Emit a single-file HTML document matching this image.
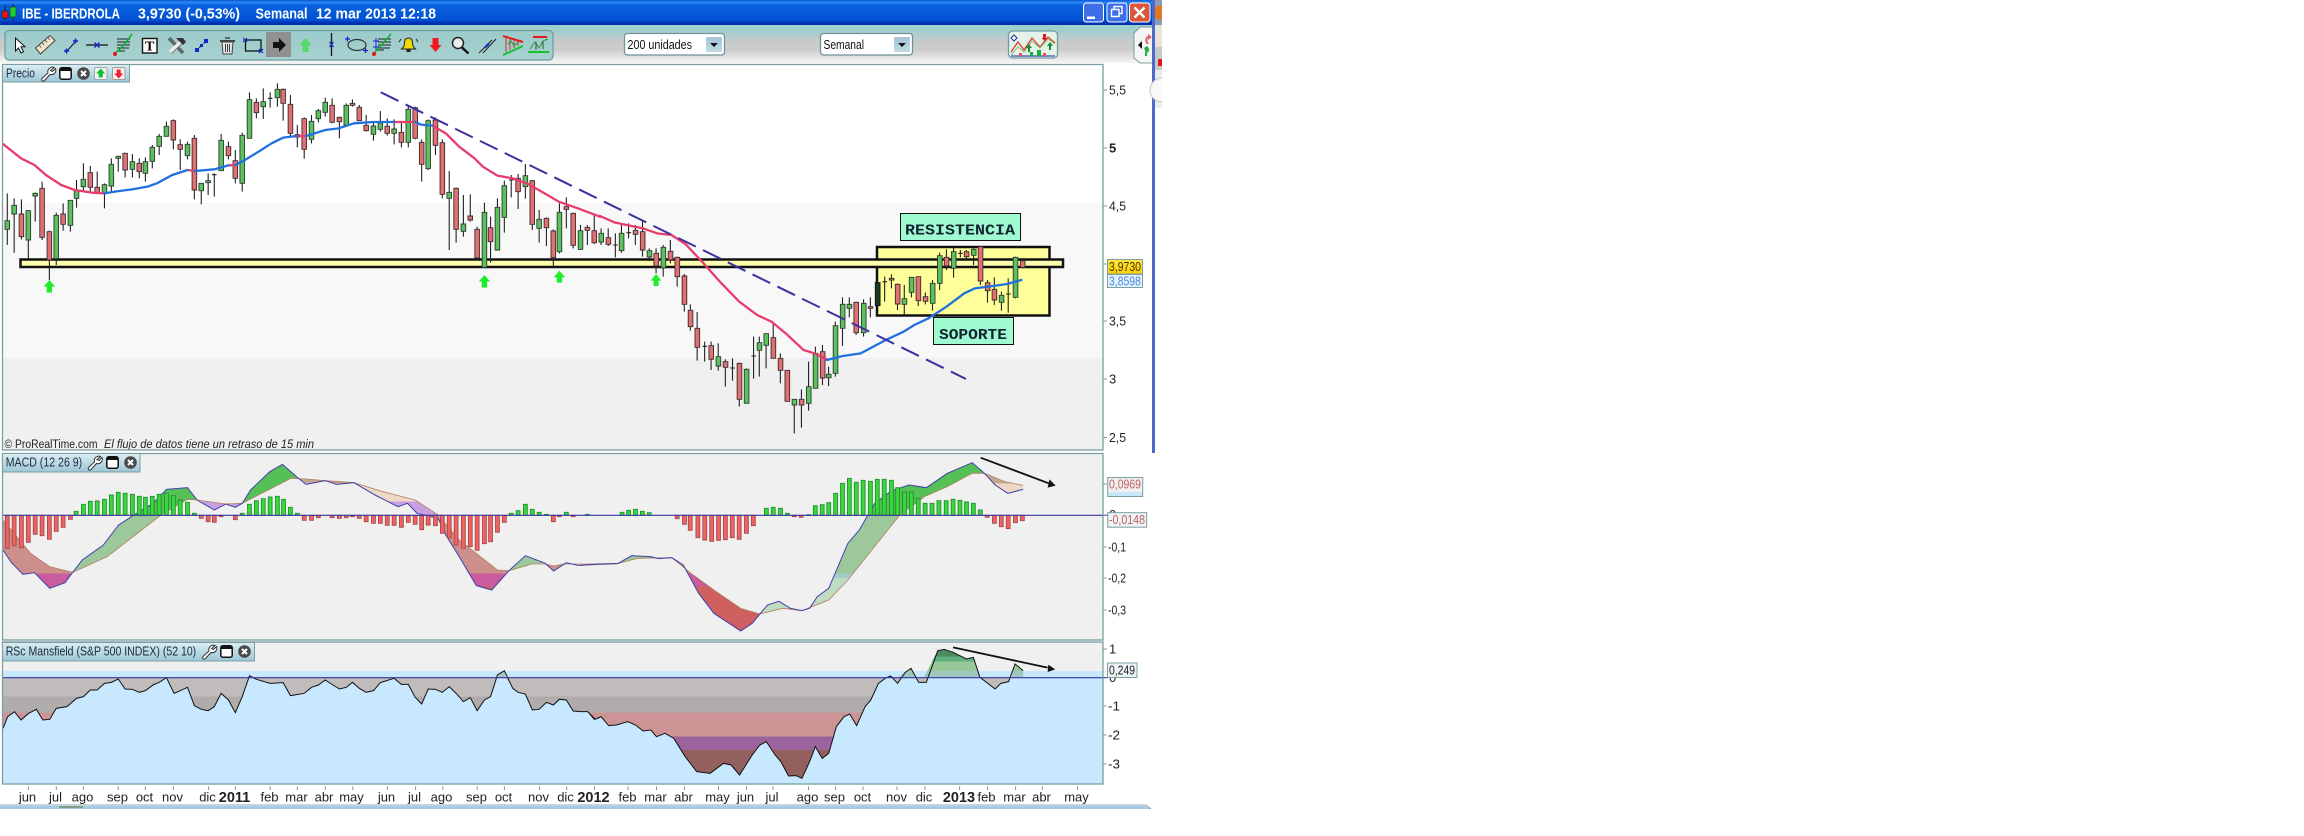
<!DOCTYPE html>
<html lang="es"><head><meta charset="utf-8"><title>IBE - IBERDROLA</title>
<style>html,body{margin:0;padding:0;background:#fff;width:2304px;height:836px;overflow:hidden}svg{display:block;position:absolute;left:0;top:0}text{font-family:"Liberation Sans",sans-serif}</style></head><body>
<svg width="2304" height="836" viewBox="0 0 2304 836" xmlns="http://www.w3.org/2000/svg">
<defs>
<linearGradient id="tb" x1="0" y1="0" x2="0" y2="1"><stop offset="0" stop-color="#0b55d8"/><stop offset=".1" stop-color="#2b8df5"/><stop offset=".2" stop-color="#0a62e0"/><stop offset=".8" stop-color="#0052d2"/><stop offset=".92" stop-color="#0030b4"/><stop offset="1" stop-color="#0030a8"/></linearGradient>
<linearGradient id="tool" x1="0" y1="0" x2="0" y2="1"><stop offset="0" stop-color="#9dcfcf"/><stop offset=".15" stop-color="#a3cdcd"/><stop offset=".45" stop-color="#cacaca"/><stop offset=".65" stop-color="#cccccc"/><stop offset="1" stop-color="#f6f6f6"/></linearGradient>
<linearGradient id="tb2" x1="0" y1="0" x2="0" y2="1"><stop offset="0" stop-color="#9ccaca"/><stop offset="1" stop-color="#a6d2d0"/></linearGradient>
<linearGradient id="tab" x1="0" y1="0" x2="0" y2="1"><stop offset="0" stop-color="#dceef2"/><stop offset="1" stop-color="#9cc6d6"/></linearGradient>
<linearGradient id="dd" x1="0" y1="0" x2="0" y2="1"><stop offset="0" stop-color="#a4c4dc"/><stop offset="1" stop-color="#c2dae0"/></linearGradient>
<linearGradient id="yel" x1="0" y1="0" x2="0" y2="1"><stop offset="0" stop-color="#ffe640"/><stop offset="1" stop-color="#ffd000"/></linearGradient>
<linearGradient id="rr" gradientUnits="userSpaceOnUse" x1="0" y1="0" x2="0" y2="600"><stop offset=".217" stop-color="#c8a890"/><stop offset=".217" stop-color="#eed8c8"/><stop offset=".308" stop-color="#eed8c8"/><stop offset=".308" stop-color="#c8a0e0"/><stop offset=".4" stop-color="#c8a0e0"/><stop offset=".4" stop-color="#cc8f8c"/><stop offset=".667" stop-color="#cc8f8c"/><stop offset=".667" stop-color="#c85c9c"/><stop offset=".733" stop-color="#c85c9c"/><stop offset=".733" stop-color="#d06060"/></linearGradient>
<linearGradient id="gg" gradientUnits="userSpaceOnUse" x1="0" y1="0" x2="0" y2="600"><stop offset=".377" stop-color="#55c055"/><stop offset=".377" stop-color="#9cc89c"/><stop offset=".667" stop-color="#9cc89c"/><stop offset=".667" stop-color="#a4ccc8"/><stop offset=".69" stop-color="#a4ccc8"/><stop offset=".69" stop-color="#c0dcc0"/></linearGradient>
<linearGradient id="rs" gradientUnits="userSpaceOnUse" x1="0" y1="600" x2="0" y2="1100"><stop offset=".056" stop-color="#4c8c5c"/><stop offset=".1" stop-color="#4c8c5c"/><stop offset=".1" stop-color="#60b080"/><stop offset=".13" stop-color="#60b080"/><stop offset=".13" stop-color="#98c898"/><stop offset=".186" stop-color="#98c898"/><stop offset=".186" stop-color="#a0c8c0"/><stop offset=".226" stop-color="#a0c8c0"/><stop offset=".226" stop-color="#c0bcbc"/><stop offset=".34" stop-color="#c0bcbc"/><stop offset=".34" stop-color="#b0acac"/><stop offset=".436" stop-color="#b0acac"/><stop offset=".436" stop-color="#cc9494"/><stop offset=".58" stop-color="#cc9494"/><stop offset=".58" stop-color="#9c649c"/><stop offset=".66" stop-color="#9c649c"/><stop offset=".66" stop-color="#94605e"/></linearGradient>
<g id="wr"><path d="M13 1.500a4.500 4.500 0 0 0-6 5.500L1 12.500a1.500 1.500 0 0 0 2.500 2L9 8.500a4.500 4.500 0 0 0 5.500-6L11.500 5.500 9.500 4.500z" fill="#fff" stroke="#333" stroke-width="1"/></g>
<g id="wn"><rect x=".8" y=".8" width="11.400" height="11.400" rx="2" fill="#fff" stroke="#111" stroke-width="1.500"/><rect x="1" y="1" width="11" height="3" fill="#111"/></g>
<g id="xc"><circle cx="6.500" cy="6.500" r="6.300" fill="#4a4a4a"/><path d="M4 4l5 5M9 4l-5 5" stroke="#fff" stroke-width="2"/></g>
</defs>

<rect width="2304" height="836" fill="#fff"/>
<!-- title -->
<rect x="0" y="0" width="1153" height="25" fill="url(#tb)"/>
<path d="M5 5V21" stroke="#222"/>
<rect x="2" y="11" width="6" height="7" fill="#e8141c" stroke="#222" stroke-width=".6"/>
<path d="M13 4V21" stroke="#222"/>
<rect x="10" y="7" width="6" height="10" fill="#18d030" stroke="#222" stroke-width=".6"/>
<g fill="#fff" font-weight="bold" font-size="15">
<text x="22" y="18.500" textLength="98" lengthAdjust="spacingAndGlyphs">IBE - IBERDROLA</text>
<text x="138" y="18.500" textLength="102" lengthAdjust="spacingAndGlyphs">3,9730 (-0,53%)</text>
<text x="255.500" y="18.500" textLength="52" lengthAdjust="spacingAndGlyphs">Semanal</text>
<text x="316" y="18.500" textLength="120" lengthAdjust="spacingAndGlyphs">12 mar 2013 12:18</text>
</g>
<rect x="1083.500" y="3" width="20" height="19" rx="3" fill="#3c6ee8" stroke="#fff"/>
<rect x="1087" y="16.500" width="8" height="2.500" fill="#fff"/>
<rect x="1107" y="3" width="20" height="19" rx="3" fill="#3c6ee8" stroke="#fff"/>
<path d="M1114 9V6.500h8v7h-2.500M1111.500 9.500h7.500v7h-7.500z" fill="none" stroke="#fff" stroke-width="1.400"/>
<rect x="1129.500" y="3" width="20.500" height="19" rx="3" fill="#d9583a" stroke="#fff"/>
<path d="M1134.500 7.500l10 10M1144.500 7.500l-10 10" stroke="#fff" stroke-width="2.400"/>

<!-- toolbar -->
<rect x="0" y="25" width="1153" height="38" fill="url(#tool)"/>
<rect x="5" y="30.500" width="548" height="29.500" rx="4" fill="url(#tb2)" stroke="#6f9ea2" stroke-width="1.300"/>
<rect x="266" y="32" width="25" height="25" fill="#8f9191"/>
<path d="M15.500 38V51l3-3 2.500 5 2.500-1.200-2.500-5h4z" fill="#fff" stroke="#111"/>
<path d="M35.500 48L50 35.500l5 5L40.500 54z" fill="#efe6c8" stroke="#444"/>
<path d="M39 45l2 2.500M42 42.500l2 2.500M45 40l2 2.500M48 37.500l2 2.500" stroke="#555"/>
<path d="M67 51L76 41" stroke="#124" stroke-width="1.200"/>
<path d="M64 51h5M66.500 48.500v5M73 41h5M75.500 38.500v5" stroke="#1820d0" stroke-width="1.500"/>
<path d="M86 45H108" stroke="#111" stroke-width="1.200"/><path d="M94.500 42.500l5 5M99.500 42.500l-5 5" stroke="#1820d0" stroke-width="1.300"/>
<path d="M117 39h13M117 42h13M117 45h13M117 48h12M117 51h8" stroke="#222"/>
<path d="M114 54l6-5 7-8 5-7" stroke="#10b030" fill="none" stroke-width="1.600"/><circle cx="115" cy="54" r="2" fill="#e81818"/>
<rect x="142.500" y="38.500" width="14.500" height="14.500" fill="#fff" stroke="#111" stroke-width="1.400"/>
<text x="145" y="50.500" font-size="14" font-weight="bold" style="font-family:'Liberation Serif',serif">T</text>
<path d="M169 38l14 15M172 40l-2 2" stroke="#666" stroke-width="3.500"/><path d="M184 39l-14 13" stroke="#eee" stroke-width="3.500"/><path d="M184 39l-14 13" stroke="#777" stroke-width="1" transform="translate(1.500 1.500)"/>
<path d="M176 38h7l3 4-3 3-4-4z" fill="#333"/>
<path d="M197 50L206 41" stroke="#124" stroke-dasharray="2 1"/><rect x="195" y="48" width="4" height="4" fill="#1820d0"/><rect x="204" y="39" width="4" height="4" fill="#1820d0"/><rect x="200" y="44" width="3" height="3" fill="#1820d0"/>
<path d="M220 41h15" stroke="#444" stroke-width="2"/><path d="M225 38h5" stroke="#444" stroke-width="1.500"/>
<path d="M222 42l1 12h9l1-12z" fill="#e4e4e4" stroke="#444"/><path d="M225.500 44v8M227.500 44v8M229.500 44v8" stroke="#444"/>
<rect x="245.500" y="40" width="15.500" height="11" fill="none" stroke="#111" stroke-width="1.300"/>
<path d="M243 38l4 4M247 38l-4 4M259 49l4 4M263 49l-4 4" stroke="#1820d0" stroke-width="1.200"/>
<path d="M273 42h6v-4l7 7-7 7v-4h-6z" fill="#111"/>
<path d="M305.500 38l6 7h-3v7h-6v-7h-3z" fill="#58d868"/>
<path d="M331.500 33V56" stroke="#111" stroke-width="1.300"/><path d="M329.500 42l4 5M333.500 42l-4 5" stroke="#1820d0" stroke-width="1.200"/>
<ellipse cx="357" cy="45" rx="9" ry="5.500" fill="none" stroke="#333" stroke-width="1.200"/>
<path d="M345 39h5M347.500 36.500v5M363 50.500h5M365.500 48v5" stroke="#1820d0" stroke-width="1.300"/>
<path d="M378 39h13M378 42h13M378 45h13M378 48h12M378 50h6" stroke="#222"/><path d="M373 54l5-5 7-8 6-7" stroke="#10b030" fill="none" stroke-width="1.500"/><path d="M373 41h6M376 38v6M373 47h6M376 44v6" stroke="#1820d0"/><circle cx="374" cy="54" r="2" fill="#e81818"/>
<path d="M408.500 38c-3 0-4 2-4 5 0 4-2 5-3 6h14c-1-1-3-2-3-6 0-3-1-5-4-5z" fill="#f2d800" stroke="#222"/><rect x="406.500" y="49.500" width="4" height="2.500" fill="#222"/>
<path d="M401 39l-2 3M416 39l2 3" stroke="#222"/>
<path d="M435.500 52l-6-7h3v-7h6v7h3z" fill="#ee1a24"/>
<circle cx="458" cy="43" r="5.500" fill="#e8eef0" stroke="#222" stroke-width="1.500"/><path d="M462 47.500l6.500 6" stroke="#111" stroke-width="2.500"/>
<path d="M479 53L492 40M483 53l13-14" stroke="#222"/><path d="M485 47.500l4-4" stroke="#1820d0" stroke-width="2"/>
<path d="M503 36l20 6" stroke="#e81818" stroke-width="2"/><path d="M503 55l20-9" stroke="#18c030" stroke-width="2"/><path d="M506 38v14M510 39v11M514 40v8M518 41v5" stroke="#d03030"/><path d="M508 44l3-3 3 5 4-4" stroke="#18a030" fill="none"/>
<path d="M533 37h14" stroke="#e81818" stroke-width="2"/><path d="M528 52h21" stroke="#18c030" stroke-width="2"/><path d="M530 49l5-7 4 6 4-7 5-2" stroke="#18a030" fill="none"/><path d="M536 42v8M543 41v8" stroke="#444"/>

<!-- combos -->
<rect x="624.500" y="33.500" width="100" height="21.500" rx="3" fill="#fff" stroke="#6f9498" stroke-width="1.300"/>
<rect x="706" y="37" width="16" height="15" rx="1" fill="url(#dd)"/><path d="M710 43h8l-4 4z" fill="#111"/>
<text x="627.500" y="49" font-size="13" fill="#111" textLength="64.500" lengthAdjust="spacingAndGlyphs">200 unidades</text>
<rect x="820.500" y="33.500" width="92" height="21.500" rx="3" fill="#fff" stroke="#6f9498" stroke-width="1.300"/>
<rect x="894" y="37" width="16" height="15" rx="1" fill="url(#dd)"/><path d="M898 43h8l-4 4z" fill="#111"/>
<text x="823.500" y="49" font-size="13" fill="#111" textLength="40.500" lengthAdjust="spacingAndGlyphs">Semanal</text>
<rect x="1008.500" y="31" width="49" height="27" rx="4" fill="#e4f2ea" stroke="#6f9ea2" stroke-width="1.300"/>
<path d="M1011 52l7-10 6 8 8-12 8 9 8-10 7 6" fill="none" stroke="#d84030" stroke-width="1.300"/>
<path d="M1011 55l7-8 6 5 8-11 8 7 8-9 7 5" fill="none" stroke="#88c070" stroke-width="1"/>
<path d="M1014 35l3 3-3 3-3-3z" fill="#fff" stroke="#2030a0"/>
<path d="M1044 42v-4h-1.500l3-3 0 0 3 3h-1.500v4z" fill="#e01820" transform="rotate(180 1045 38)"/>
<path d="M1028 52v-4h-2l3-4 3 4h-2v4z" fill="#109030"/><path d="M1049 50v-4h-2l3-4 3 4h-2v4z" fill="#109030"/>
<path d="M1011 56h44" stroke="#1020a0"/><rect x="1030" y="52" width="3" height="4" fill="#10b040"/><rect x="1037" y="50" width="4" height="6" fill="#10b040"/><rect x="1019" y="53" width="3" height="3" fill="#e85060"/><rect x="1043" y="53" width="3" height="3" fill="#e85060"/>
<path d="M1153 27h-13l-6 6v25l6 5h13z" fill="#f5f5f5" stroke="#7a9ea0"/>
<path d="M1138 45l4-4v8z" fill="#111"/>
<path d="M1147 44c-3-3-2-7 1-8v-2l4 3-4 3v-2c-1 1-1 3 1 6z" fill="#e06070"/>
<path d="M1147 46c3 3 2 6 0 7v3h-2v-3c1-1 0-3-1-5z" fill="#20b040"/><path d="M1146 47l4 3h-5z" fill="#20b040"/>

<!-- panels -->
<rect x="2.500" y="64" width="1100.500" height="386" fill="#fff"/>
<rect x="2.500" y="203" width="1100.500" height="155" fill="#f8f8f8"/>
<rect x="2.500" y="358" width="1100.500" height="92" fill="#f0f0f0"/>
<rect x="2.500" y="453.500" width="1100.500" height="186.500" fill="#f0f0f0"/>
<rect x="2.500" y="642" width="1100.500" height="29" fill="#f0f0f0"/>
<rect x="2.500" y="671" width="1100.500" height="113" fill="#c8e8ff"/>

<rect x="877" y="247" width="172.500" height="68.500" fill="#ffff99" stroke="#111" stroke-width="2.500"/>
<rect x="20.500" y="259.500" width="1042.500" height="7.500" fill="#ffffb0" stroke="#111" stroke-width="2.500"/>

<g transform="translate(0 60) scale(.38265 .33333)">
<path vector-effect="non-scaling-stroke" fill="none" stroke="#222" stroke-width="1.100" d="M19 400V555M37 415V578M56 418V538M74 450V598M92 397V485M110 365V540M129 512V660M147 458V615M165 430V512M184 420V515M200 360V443M218 310V395M236 318V395M254 335V400M273 370V445M291 295V395M309 287V335M327 278V352M346 282V352M364 295V355M380 292V365M398 255V325M416 222V285M435 185V230M453 178V268M471 238V330M490 245V298M508 225V418M526 370V433M544 340V405M560 340V410M578 222V332M597 245V298M615 270V370M633 218V395M652 97V235M670 115V175M688 85V177M706 97V143M725 70V140M740 85V182M759 105V228M777 195V262M795 172V296M814 165V250M832 147V187M850 113V170M868 115V190M887 170V235M905 130V200M921 118V140M939 135V183M957 165V215M976 183V242M994 153V215M1012 175V227M1030 178V253M1049 188V262M1067 135V262M1085 140V238M1102 238V365M1119 178V330M1138 172V285M1156 238V415M1174 333V570M1192 383V548M1211 405V530M1229 403V485M1247 500V600M1266 428V622M1282 470V608M1300 415V572M1318 362V518M1336 345V412M1354 342V447M1373 312V416M1391 360V510M1409 450V548M1428 472V558M1446 508V620M1462 430V580M1480 412V505M1498 458V565M1517 495V570M1535 495V555M1553 465V552M554 344h12M700 115h12M1330 360h12"/>
<path vector-effect="non-scaling-stroke" fill="#5cc060" stroke="#2c3c2c" stroke-width=".9" d="M13 482h12v26h-12zM31 436h12v26h-12zM68 452h12v88h-12zM86 400h12v8h-12zM141 466h12v130h-12zM178 421h12v75h-12zM194 390h12v25h-12zM212 358h12v22h-12zM267 374h12v26h-12zM285 313h12v65h-12zM303 289h12v6h-12zM340 305h12v23h-12zM374 305h12v35h-12zM392 262h12v42h-12zM410 229h12v30h-12zM429 199h12v30h-12zM484 253h12v34h-12zM520 370h12v22h-12zM538 362h12v6h-12zM572 241h12v91h-12zM627 226h12v144h-12zM646 119h12v116h-12zM682 125h12v15h-12zM719 88h12v25h-12zM808 184h12v54h-12zM826 152h12v24h-12zM844 127h12v30h-12zM899 136h12v59h-12zM970 198h12v25h-12zM988 189h12v19h-12zM1024 207h12v13h-12zM1061 148h12v99h-12zM1113 182h12v144h-12zM1168 397h12v18h-12zM1205 492h12v22h-12zM1260 457h12v165h-12zM1294 442h12v128h-12zM1312 377h12v95h-12zM1367 347h12v33h-12zM1403 478h12v27h-12zM1456 457h12v118h-12zM1511 512h12v56h-12z"/>
<path vector-effect="non-scaling-stroke" fill="#e07074" stroke="#3c2c2c" stroke-width=".9" d="M50 462h12v68h-12zM104 385h12v147h-12zM123 515h12v85h-12zM159 462h12v31h-12zM230 338h12v44h-12zM248 382h12v16h-12zM321 280h12v50h-12zM358 310h12v25h-12zM447 182h12v58h-12zM465 254h12v14h-12zM502 235h12v155h-12zM591 260h12v27h-12zM609 302h12v53h-12zM664 127h12v31h-12zM734 88h12v42h-12zM753 133h12v87h-12zM771 224h12v7h-12zM789 176h12v92h-12zM862 136h12v51h-12zM881 172h12v13h-12zM915 130h12v6h-12zM933 142h12v40h-12zM951 196h12v16h-12zM1006 199h12v21h-12zM1043 217h12v30h-12zM1079 143h12v92h-12zM1096 247h12v66h-12zM1132 180h12v76h-12zM1150 248h12v155h-12zM1186 385h12v123h-12zM1223 468h12v12h-12zM1241 508h12v86h-12zM1276 503h12v42h-12zM1348 355h12v40h-12zM1385 362h12v131h-12zM1422 475h12v28h-12zM1440 513h12v80h-12zM1474 440h12v8h-12zM1492 460h12v96h-12zM1529 502h12v9h-12zM1547 512h12v36h-12z"/>
<g fill="none" stroke-linejoin="round" stroke-linecap="round">
<path vector-effect="non-scaling-stroke" stroke="#e83c6c" stroke-width="2.300" d="M8 252L55 295 90 315 120 345 160 375 195 390 240 398 273 400M490 330L510 333M597 316L615 315M775 228L800 228M1030 186L1085 186M1130 197L1165 220 1200 260 1240 295 1262 320 1300 347 1340 355 1380 372 1420 398 1460 425 1510 445 1568 470"/>
<path vector-effect="non-scaling-stroke" stroke="#2070e0" stroke-width="2.300" d="M273 400L300 395 345 388 385 380 410 370 450 345 490 330M510 333L560 328 597 316M615 315L640 300 680 272 710 250 740 233 775 228M800 228L850 210 885 205 925 190 975 186 1030 186M1085 186L1100 194 1130 197"/>
</g>
<g fill="#1eee2a">
<path d="M129 660l15 20h-8v18h-14v-18h-8z"/><path d="M1266 645l15 20h-8v18h-14v-18h-8z"/><path d="M1462 632l15 20h-8v16h-14v-16h-8z"/>
</g>
</g>
<g transform="translate(600 60) scale(.35714 .33333)">
<path vector-effect="non-scaling-stroke" fill="none" stroke="#222" stroke-width="1.100" d="M3 505V555M23 505V558M43 520V592M60 495V578M80 490V535M99 495V555M119 485V590M138 565V603M157 565V640M177 555V650M197 540V610M216 590V680M236 642V755M253 733V812M272 756V902M293 845V905M311 845V930M331 850V932M351 898V980M371 895V962M390 908V1040M410 925V1030M430 830V956M446 830V950M465 820V925M485 790V895M505 880V970M524 930V1025M544 1018V1120M564 988V1103M584 905V1052M603 860V985M623 855V975M640 920V978M659 785V950M679 712V858M698 712V772M717 725V825M738 718V830M757 712V772M777 665V740M797 650V725M816 643V685M833 670V750M852 675V765M872 652V712M891 650V738M911 697V733M931 660V752M951 578V690M970 568V630M990 562V653M1009 570V592M1026 570V600M1046 565V615M1065 560V675M1085 660V728M1104 652V735M1124 695V752M1143 655V758M1163 590V715M1183 595V625M37 555h13M74 518h13M287 859h13M365 924h13M424 888h13M791 665h13M1003 580h13M1137 702h13"/>
<path vector-effect="non-scaling-stroke" fill="#5cc060" stroke="#2c3c2c" stroke-width=".9" d="M-3 520h13v26h-13zM54 520h13v52h-13zM132 572h13v19h-13zM171 562h13v62h-13zM325 890h13v28h-13zM404 928h13v102h-13zM440 848h13v23h-13zM459 821h13v35h-13zM538 1018h13v17h-13zM578 980h13v50h-13zM597 880h13v105h-13zM634 943h13v10h-13zM653 797h13v143h-13zM673 733h13v72h-13zM692 733h13v12h-13zM732 730h13v88h-13zM846 716h13v17h-13zM866 652h13v45h-13zM925 670h13v60h-13zM945 587h13v83h-13zM984 575h13v50h-13zM1040 568h13v18h-13zM1118 706h13v21h-13zM1157 592h13v120h-13z"/>
<path vector-effect="non-scaling-stroke" fill="#1e3a22" stroke="#111" stroke-width="1" d="M771 668h13v69h-13z"/>
<path vector-effect="non-scaling-stroke" fill="#e07074" stroke="#3c2c2c" stroke-width=".9" d="M17 533h13v20h-13zM93 511h13v12h-13zM113 515h13v55h-13zM151 580h13v38h-13zM191 574h13v26h-13zM210 592h13v58h-13zM230 648h13v85h-13zM247 751h13v49h-13zM266 805h13v57h-13zM305 857h13v41h-13zM345 905h13v17h-13zM384 910h13v108h-13zM479 833h13v62h-13zM499 895h13v36h-13zM518 931h13v93h-13zM558 1018h13v17h-13zM617 875h13v79h-13zM711 727h13v91h-13zM751 740h13v5h-13zM810 655h13v5h-13zM827 673h13v59h-13zM885 650h13v72h-13zM905 710h13v14h-13zM964 592h13v26h-13zM1020 575h13v15h-13zM1059 560h13v103h-13zM1079 668h13v24h-13zM1098 688h13v32h-13zM1177 602h13v20h-13z"/>
<g fill="none" stroke-linejoin="round" stroke-linecap="round">
<path vector-effect="non-scaling-stroke" stroke="#e83c6c" stroke-width="2.300" d="M0 468L40 487 80 496 120 505 160 520 200 525 240 553 290 610 340 670 390 725 440 765 480 785 520 820 570 870 600 880 635 898"/>
<path vector-effect="non-scaling-stroke" stroke="#2070e0" stroke-width="2.300" d="M635 900L680 888 730 880 800 840 850 815 880 795 920 775 970 740 1020 700 1050 685 1100 678 1140 672 1180 660"/>
</g>
<path d="M157 642l15 20h-8v16h-14v-16h-8z" fill="#1eee2a"/>
</g>
<path d="M380.800 92.300L966 379" stroke="#3f2fa0" stroke-width="2" stroke-dasharray="19.600 8" fill="none"/>

<rect x="900.500" y="213.500" width="120" height="27" fill="#9ffad0" stroke="#111"/>
<text x="905" y="234.500" font-size="14.500" font-weight="bold" fill="#123" textLength="110" lengthAdjust="spacingAndGlyphs" style="font-family:'Liberation Mono',monospace">RESISTENCIA</text>
<rect x="933.500" y="317.500" width="80" height="27" fill="#9ffad0" stroke="#111"/>
<text x="939" y="339" font-size="14.500" font-weight="bold" fill="#123" textLength="68" lengthAdjust="spacingAndGlyphs" style="font-family:'Liberation Mono',monospace">SOPORTE</text>

<text x="4.500" y="448" font-size="11.500" fill="#222" textLength="93" lengthAdjust="spacingAndGlyphs">© ProRealTime.com</text>
<text x="104" y="448" font-size="11.500" font-style="italic" fill="#222" textLength="210" lengthAdjust="spacingAndGlyphs">El flujo de datos tiene un retraso de 15 min</text>

<g transform="translate(0 440) scale(.38265 .33333)">
<path fill="url(#rr)" d="M8 330L30 368 60 403 90 398 130 445 170 428 190 397 130 380 80 340 8 240zM515 180L560 210 590 192 615 202 633 190 590 192zM780 115L800 133 850 122 880 133 925 128 980 165 1040 200 1065 190 1090 220 1145 235 1165 285 1200 350 1245 437 1285 450 1330 392 1300 390 1200 300 1145 225 1085 180 1000 155 925 128 850 122 800 117zM1425 370L1447 393 1480 368 1447 378z"/>
<path fill="url(#gg)" d="M190 397L215 360 270 315 310 255 350 225 400 190 435 148 490 143 515 180 490 178 420 226 280 350zM633 190L655 150 705 95 738 73 780 115 760 115zM1330 392L1373 347 1425 370 1390 372z"/>
<path vector-effect="non-scaling-stroke" fill="none" stroke="#b08060" stroke-width=".8" d="M8 240L80 340 130 380 190 397 280 350 420 226 490 178 515 180 590 192 633 190 760 115 800 117 850 122 925 128 1000 155 1085 180 1145 225 1200 300 1300 390 1330 392 1390 372 1425 372 1447 378 1480 372 1568 372"/>
<path vector-effect="non-scaling-stroke" fill="none" stroke="#4040b0" stroke-width="1" d="M8 330L30 368 60 403 90 398 130 445 170 428 190 397 215 360 270 315 310 255 350 225 400 190 435 148 490 143 515 180 560 210 590 192 615 202 633 190 655 150 705 95 738 73 780 115 800 133 850 122 880 133 925 128 980 165 1040 200 1065 190 1090 220 1145 235 1165 285 1200 350 1245 437 1285 450 1330 392 1373 347 1425 370 1447 393 1480 368 1510 376 1568 372"/>
<path vector-effect="non-scaling-stroke" fill="#3ad83a" stroke="#1f9030" stroke-width=".9" d="M194 214h10V226h-10zM213 193h10V226h-10zM231 184h10V226h-10zM249 183h10V226h-10zM268 178h10V226h-10zM286 165h10V226h-10zM304 157h10V226h-10zM322 160h10V226h-10zM341 163h10V226h-10zM359 169h10V226h-10zM375 172h10V226h-10zM393 169h10V226h-10zM411 163h10V226h-10zM430 160h10V226h-10zM448 167h10V226h-10zM466 180h10V226h-10zM485 187h10V226h-10zM503 220h10V226h-10zM628 220h10V226h-10zM647 193h10V226h-10zM665 182h10V226h-10zM683 176h10V226h-10zM701 171h10V226h-10zM720 169h10V226h-10zM736 178h10V226h-10zM754 202h10V226h-10zM772 220h10V226h-10zM1331 220h10V226h-10zM1349 212h10V226h-10zM1368 193h10V226h-10zM1386 208h10V226h-10zM1404 217h10V226h-10zM1423 223h10V226h-10zM1475 217h10V226h-10zM1530 223h10V226h-10z"/>
<path vector-effect="non-scaling-stroke" fill="#f06262" stroke="#a84848" stroke-width=".9" d="M14 226h10V325h-10zM32 226h10V317h-10zM51 226h10V323h-10zM69 226h10V307h-10zM87 226h10V283h-10zM105 226h10V287h-10zM124 226h10V298h-10zM142 226h10V274h-10zM160 226h10V262h-10zM179 226h10V238h-10zM521 226h10V235h-10zM539 226h10V245h-10zM555 226h10V247h-10zM573 226h10V230h-10zM610 226h10V239h-10zM790 226h10V241h-10zM809 226h10V241h-10zM827 226h10V233h-10zM863 226h10V233h-10zM882 226h10V235h-10zM900 226h10V233h-10zM916 226h10V230h-10zM934 226h10V235h-10zM952 226h10V245h-10zM971 226h10V250h-10zM989 226h10V250h-10zM1007 226h10V256h-10zM1025 226h10V256h-10zM1044 226h10V262h-10zM1062 226h10V247h-10zM1080 226h10V253h-10zM1097 226h10V269h-10zM1114 226h10V255h-10zM1133 226h10V257h-10zM1151 226h10V280h-10zM1169 226h10V294h-10zM1187 226h10V315h-10zM1206 226h10V325h-10zM1224 226h10V320h-10zM1242 226h10V331h-10zM1261 226h10V311h-10zM1277 226h10V305h-10zM1295 226h10V277h-10zM1313 226h10V247h-10zM1441 226h10V245h-10zM1457 226h10V230h-10zM1493 226h10V230h-10z"/>
</g>
<g transform="translate(580 440) scale(.38265 .33333)">
<path fill="url(#gg)" d="M95 372L135 347 185 350 205 356 240 353 150 355zM470 522L490 495 520 484 550 505 530 505zM580 512L600 505 620 470 650 445 700 310 730 270 770 190 815 152 860 135 905 143 960 100 1025 68 1057 100 1025 100 960 140 900 170 835 226 700 420 650 480z"/>
<path fill="url(#rr)" d="M240 353L270 375 310 460 350 520 420 573 450 550 470 522 420 505 350 450 290 400zM550 505L580 512 530 505zM1057 100L1085 135 1118 160 1158 148 1158 136 1110 125z"/>
<path vector-effect="non-scaling-stroke" fill="none" stroke="#b08060" stroke-width=".8" d="M0 376L95 372 150 355 240 353 290 400 350 450 420 505 470 522 530 505 580 512 650 480 700 420 835 226 900 170 960 140 1025 100 1057 100 1110 125 1158 136"/>
<path vector-effect="non-scaling-stroke" fill="none" stroke="#4040b0" stroke-width="1" d="M0 376L50 372 100 370 135 347 185 350 205 356 240 353 270 375 310 460 350 520 420 573 450 550 470 522 490 495 520 484 550 505 580 512 600 505 620 470 650 445 700 310 730 270 770 190 815 152 860 135 905 143 960 100 1025 68 1057 100 1085 135 1118 160 1158 148"/>
<path vector-effect="non-scaling-stroke" fill="#3ad83a" stroke="#1f9030" stroke-width=".9" d="M105 217h10V226h-10zM122 211h10V226h-10zM140 208h10V226h-10zM158 214h10V226h-10zM176 218h10V226h-10zM482 205h10V226h-10zM500 202h10V226h-10zM519 205h10V226h-10zM537 220h10V226h-10zM592 224h10V226h-10zM610 197h10V226h-10zM628 194h10V226h-10zM645 188h10V226h-10zM663 160h10V226h-10zM681 130h10V226h-10zM699 115h10V226h-10zM717 127h10V226h-10zM735 121h10V226h-10zM754 124h10V226h-10zM772 118h10V226h-10zM790 118h10V226h-10zM809 121h10V226h-10zM825 143h10V226h-10zM843 156h10V226h-10zM861 156h10V226h-10zM879 176h10V226h-10zM897 190h10V226h-10zM915 190h10V226h-10zM933 182h10V226h-10zM952 182h10V226h-10zM970 178h10V226h-10zM988 181h10V226h-10zM1005 186h10V226h-10zM1023 190h10V226h-10zM1041 210h10V226h-10z"/>
<path vector-effect="non-scaling-stroke" fill="#f06262" stroke="#a84848" stroke-width=".9" d="M249 226h10V236h-10zM268 226h10V253h-10zM283 226h10V271h-10zM303 226h10V293h-10zM321 226h10V300h-10zM339 226h10V304h-10zM357 226h10V301h-10zM375 226h10V299h-10zM393 226h10V293h-10zM411 226h10V298h-10zM430 226h10V280h-10zM448 226h10V257h-10zM555 226h10V230h-10zM573 226h10V232h-10zM1059 226h10V232h-10zM1078 226h10V250h-10zM1096 226h10V260h-10zM1114 226h10V266h-10zM1133 226h10V248h-10zM1151 226h10V242h-10z"/>
<path d="M1047 53L1225 130" stroke="#111" fill="none" vector-effect="non-scaling-stroke" style="stroke-width:1.800px"/>
<path d="M1243 137L1222 143 1227 118z" fill="#111"/>
</g>
<path d="M2.500 515.300H1108" stroke="#3535a0" stroke-width="1.200"/>

<g transform="translate(0 440) scale(.38265 .33333)">
<path fill="url(#rs)" d="M8 713V865L20 830 38 815 55 840 75 820 95 808 112 840 130 838 147 805 175 800 200 775 218 770 236 750 254 750 273 730 291 727 309 717 327 747 346 748 364 757 380 752 400 735 416 727 435 713 455 760 471 752 490 742 508 797 526 808 544 812 560 800 578 760 597 780 615 818 633 770 652 713 670 718 706 730 740 728 759 767 795 760 814 742 832 735 850 720 870 735 887 747 905 742 921 727 939 745 957 757 976 752 994 728 1030 715 1049 733 1067 733 1085 772 1102 792 1119 747 1138 748 1156 757 1174 740 1192 760 1211 785 1229 773 1247 812 1266 780 1282 770 1296 713H1322L1340 745 1354 757 1373 762 1391 810 1409 808 1428 787 1446 795 1462 778 1480 780 1498 813 1517 815 1535 813 1553 838 1568 832V713z"/>
<path fill="#a0c8c0" d="M1296 713L1300 705 1318 692 1322 713zM648 713L652 707 658 713z"/>
<path vector-effect="non-scaling-stroke" fill="none" stroke="#111" stroke-width="1" d="M8 865L20 830 38 815 55 840 75 820 95 808 112 840 130 838 147 805 175 800 200 775 218 770 236 750 254 750 273 730 291 727 309 717 327 747 346 748 364 757 380 752 400 735 416 727 435 713 455 760 471 752 490 742 508 797 526 808 544 812 560 800 578 760 597 780 615 818 633 770 652 707 670 718 706 730 740 728 759 767 795 760 814 742 832 735 850 720 870 735 887 747 905 742 921 727 939 745 957 757 976 752 994 728 1030 715 1049 733 1067 733 1085 772 1102 792 1119 747 1138 748 1156 757 1174 740 1192 760 1211 785 1229 773 1247 812 1266 780 1282 770 1300 705 1318 692 1340 745 1354 757 1373 762 1391 810 1409 808 1428 787 1446 795 1462 778 1480 780 1498 813 1517 815 1535 813 1553 838 1568 832"/>
</g>
<g transform="translate(580 440) scale(.38265 .33333)">
<path fill="url(#rs)" d="M0 713V815L20 815 40 838 55 830 75 857 95 855 125 845 145 855 165 873 185 870 200 890 222 880 245 895 275 950 305 995 340 1000 375 970 395 975 417 1005 450 945 470 915 487 905 510 945 525 965 545 1008 565 1007 580 1015 600 965 615 920 633 955 650 940 670 860 690 830 705 822 723 857 745 800 760 780 780 730 800 713z"/>
<path fill="url(#rs)" d="M800 713L812 708 818 713zM830 713L850 697 865 685 876 713zM898 713L935 632 952 628 975 637 1010 657 1028 652 1045 713zM1127 713L1137 672 1158 692V713z"/>
<path fill="#c0bcbc" d="M1045 713L1085 747 1100 730 1120 725 1127 713zM818 713L830 730 842 713zM876 713L885 727 905 727 911 713z"/>
<path vector-effect="non-scaling-stroke" fill="none" stroke="#111" stroke-width="1" d="M0 815L20 815 40 838 55 830 75 857 95 855 125 845 145 855 165 873 185 870 200 890 222 880 245 895 275 950 305 995 340 1000 375 970 395 975 417 1005 450 945 470 915 487 905 510 945 525 965 545 1008 565 1007 580 1015 600 965 615 920 633 955 650 940 670 860 690 830 705 822 723 857 745 800 760 780 780 730 800 713 812 708 830 730 850 697 865 685 885 727 905 727 935 632 952 628 975 637 1010 657 1028 652 1045 712 1085 747 1100 730 1120 725 1137 672 1158 692"/>
<path d="M975 622L1222 683" stroke="#111" fill="none" vector-effect="non-scaling-stroke" style="stroke-width:1.800px"/>
<path d="M1242 688L1222 696 1224 674z" fill="#111"/>
</g>
<path d="M2.500 677.700H1108" stroke="#3535a0" stroke-width="1.200"/>

<g fill="none" stroke="#7a9ea2" stroke-width="1.300">
<rect x="2.500" y="64.500" width="1100.500" height="385.500"/>
<rect x="2.500" y="453.500" width="1100.500" height="186.500"/>
<rect x="2.500" y="642" width="1100.500" height="142"/>
</g>

<!-- tabs -->
<rect x="2.500" y="64.500" width="127" height="17.500" fill="url(#tab)" stroke="#7a9ea2"/>
<text x="6" y="77.500" font-size="13" fill="#1c2c3c" textLength="29" lengthAdjust="spacingAndGlyphs">Precio</text>
<use href="#wr" x="41" y="66"/><use href="#wn" x="59" y="67"/><use href="#xc" x="77" y="67"/>
<rect x="94.500" y="67.500" width="12.500" height="12" rx="1.500" fill="#f0f4f4" stroke="#99aaaa"/><path d="M100.700 68.500l4.500 5h-2.500v4h-4v-4h-2.500z" fill="#10c030"/>
<rect x="112.500" y="67.500" width="12.500" height="12" rx="1.500" fill="#f4f0f0" stroke="#aa9999"/><path d="M118.700 78.500l-4.500-5h2.500v-4h4v4h2.500z" fill="#ee2030"/>

<rect x="2.500" y="453.500" width="137.500" height="18.500" fill="url(#tab)" stroke="#7a9ea2"/>
<text x="5.700" y="466.500" font-size="13" fill="#1c2c3c" textLength="76.500" lengthAdjust="spacingAndGlyphs">MACD (12 26 9)</text>
<use href="#wr" x="87.500" y="455"/><use href="#wn" x="106" y="456"/><use href="#xc" x="124" y="456"/>

<rect x="2.500" y="642.500" width="252" height="18.500" fill="url(#tab)" stroke="#7a9ea2"/>
<text x="5.700" y="655.500" font-size="13" fill="#1c2c3c" textLength="190.500" lengthAdjust="spacingAndGlyphs">RSc Mansfield (S&amp;P 500 INDEX) (52 10)</text>
<use href="#wr" x="202" y="644"/><use href="#wn" x="220" y="645"/><use href="#xc" x="238" y="645"/>

<!-- axis -->
<path d="M1103 90h4M1103 148h4M1103 206h4M1103 264h4M1103 321h4M1103 379h4M1103 437.500h4M1103 484h4M1103 515h4M1103 547h3.500M1103 578h3.500M1103 610h3.500M1103 649h4M1103 706h3.500M1103 735h3.500M1103 764h3.500" stroke="#7a9ea2" stroke-width="1"/>
<g font-size="13" fill="#222">
<text x="1109" y="94.500" textLength="17" lengthAdjust="spacingAndGlyphs">5,5</text>
<text x="1109" y="152.700" font-weight="bold">5</text>
<text x="1109" y="210.500" textLength="17" lengthAdjust="spacingAndGlyphs">4,5</text>
<text x="1109" y="325.500" textLength="17" lengthAdjust="spacingAndGlyphs">3,5</text>
<text x="1109" y="383.500">3</text>
<text x="1109" y="442" textLength="17" lengthAdjust="spacingAndGlyphs">2,5</text>
<text x="1108" y="551.500" textLength="18" lengthAdjust="spacingAndGlyphs">-0,1</text>
<text x="1108" y="582.500" textLength="18" lengthAdjust="spacingAndGlyphs">-0,2</text>
<text x="1108" y="614.500" textLength="18" lengthAdjust="spacingAndGlyphs">-0,3</text>
<text x="1109" y="653.500">1</text>
<text x="1108" y="710.500" textLength="12" lengthAdjust="spacingAndGlyphs">-1</text>
<text x="1108" y="739.500" textLength="12" lengthAdjust="spacingAndGlyphs">-2</text>
<text x="1108" y="768.500" textLength="12" lengthAdjust="spacingAndGlyphs">-3</text>
<text x="1109" y="519">0</text>
<text x="1109" y="682">0</text>
</g>
<rect x="1107.500" y="259.500" width="35" height="14.500" fill="url(#yel)" stroke="#7a9ea2"/>
<text x="1109" y="271" font-size="12.500" fill="#443300" textLength="32" lengthAdjust="spacingAndGlyphs">3,9730</text>
<rect x="1107.500" y="274.500" width="35" height="13" fill="#e4f2ff" stroke="#7a9ea2"/>
<text x="1109" y="285.500" font-size="12.500" fill="#4a8ae0" textLength="32" lengthAdjust="spacingAndGlyphs">3,8598</text>
<rect x="1107.700" y="477.500" width="35" height="19" fill="#f0f0f0" stroke="#7a9ea2"/>
<rect x="1108.500" y="492" width="33.500" height="4" fill="#c8e8ff"/>
<text x="1109" y="488.500" font-size="12.500" fill="#c06068" textLength="32" lengthAdjust="spacingAndGlyphs">0,0969</text>
<rect x="1107.700" y="512.700" width="39" height="14.500" fill="#eef4f4" stroke="#7a9ea2"/>
<text x="1109" y="524" font-size="12.500" fill="#c06068" textLength="36" lengthAdjust="spacingAndGlyphs">-0,0148</text>
<rect x="1107.500" y="663" width="29.500" height="14.500" fill="#eef4f6" stroke="#7a9ea2"/>
<text x="1109" y="674.700" font-size="12.500" fill="#222" textLength="26" lengthAdjust="spacingAndGlyphs">0,249</text>

<!-- months -->
<path d="M28.300 786.500v3.500M56.300 786.500v3.500M83.400 786.500v3.500M118.200 786.500v3.500M145.400 786.500v3.500M173.400 786.500v3.500M208.600 786.500v3.500M235.400 786.500v3.500M270.200 786.500v3.500M297.300 786.500v3.500M325.300 786.500v3.500M352.800 786.500v3.500M387.300 786.500v3.500M415.600 786.500v3.500M442.800 786.500v3.500M477.200 786.500v3.500M504.400 786.500v3.500M539.600 786.500v3.500M566.700 786.500v3.500M594.500 786.500v3.500M628 786.500v3.500M656.500 786.500v3.500M684.500 786.500v3.500M718.500 786.500v3.500M746.500 786.500v3.500M773 786.500v3.500M808.500 786.500v3.500M835.600 786.500v3.500M863 786.500v3.500M897 786.500v3.500M925 786.500v3.500M959.600 786.500v3.500M987.600 786.500v3.500M1015.600 786.500v3.500M1042.300 786.500v3.500M1077.500 786.500v3.500" stroke="#889" stroke-width="1"/>
<g font-size="13" fill="#222" text-anchor="middle">
<text x="27.500" y="801.500">jun</text><text x="55.500" y="801.500">jul</text><text x="82.500" y="801.500">ago</text><text x="117.500" y="801.500">sep</text><text x="144.500" y="801.500">oct</text><text x="172.500" y="801.500">nov</text><text x="207.500" y="801.500">dic</text>
<text x="234.500" y="802" font-weight="bold" font-size="14.500">2011</text>
<text x="269.500" y="801.500">feb</text><text x="296.500" y="801.500">mar</text><text x="324" y="801.500">abr</text><text x="351.500" y="801.500">may</text><text x="386.500" y="801.500">jun</text><text x="414.500" y="801.500">jul</text><text x="441.500" y="801.500">ago</text><text x="476.500" y="801.500">sep</text><text x="503.500" y="801.500">oct</text><text x="538.500" y="801.500">nov</text><text x="565.500" y="801.500">dic</text>
<text x="593.500" y="802" font-weight="bold" font-size="14.500">2012</text>
<text x="627.500" y="801.500">feb</text><text x="655.500" y="801.500">mar</text><text x="683.500" y="801.500">abr</text><text x="717.500" y="801.500">may</text><text x="745.500" y="801.500">jun</text><text x="772" y="801.500">jul</text><text x="807.500" y="801.500">ago</text><text x="834.500" y="801.500">sep</text><text x="862.500" y="801.500">oct</text><text x="896.500" y="801.500">nov</text><text x="924" y="801.500">dic</text>
<text x="959" y="802" font-weight="bold" font-size="14.500">2013</text>
<text x="986.500" y="801.500">feb</text><text x="1014.500" y="801.500">mar</text><text x="1041.500" y="801.500">abr</text><text x="1076.500" y="801.500">may</text>
</g>

<path d="M0 806H1146l5 3H0z" fill="#a8c8e8"/>
<path d="M0 805H1146l5 4" fill="none" stroke="#8aa8b8"/>
<rect x="59" y="806" width="24" height="2" fill="#809c8c"/>

<rect x="1152" y="0" width="3" height="453" fill="#4a6cc8"/>
<rect x="1155" y="0" width="7" height="25" fill="#8a9ab8"/>
<path d="M1155 7.500a6 6 0 0 1 7-1.500V19a6 6 0 0 1-7-1.500z" fill="#e07820"/>
<rect x="1155" y="25" width="7" height="22" fill="#e8e4d8"/>
<rect x="1155" y="47" width="7" height="23" fill="#c8c8c8"/>
<rect x="1158" y="59" width="4" height="7" fill="#e01820"/>
<rect x="1155" y="70" width="7" height="38" fill="#ececec"/>
<path d="M1162 78a12 12 0 0 0 0 24" fill="#f8f8f8" stroke="#c4c4c4"/>
</svg>
</body></html>
